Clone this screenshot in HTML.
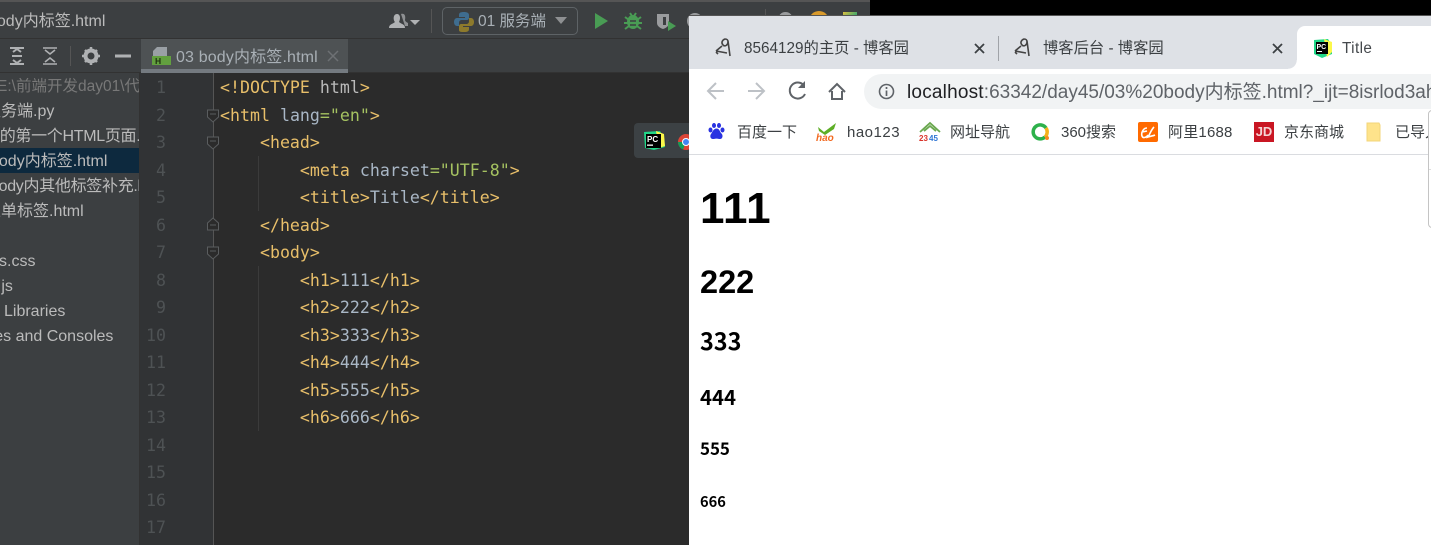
<!DOCTYPE html>
<html lang="zh"><head><meta charset="utf-8"><title>Title</title>
<style>
*{box-sizing:border-box}
html,body{margin:0;padding:0;width:1431px;height:545px;overflow:hidden;background:#000}
body{position:relative;font-family:"Liberation Sans","Noto Sans CJK SC",sans-serif}
.a{position:absolute;white-space:nowrap}
svg{position:absolute;overflow:visible}
.s{font-size:16px;color:#bbb;line-height:25px;height:25px;left:0}
.c{font-family:"DejaVu Sans Mono","Noto Sans CJK SC",monospace;font-size:16.6px;line-height:27px;height:27px;color:#bbb;left:220px;white-space:pre}
.t{color:#e8bf6a}.v{color:#a5c261}.x{color:#a9b7c6}.p{color:#bababa}
.n{font-family:"DejaVu Sans Mono",monospace;font-size:16.6px;line-height:27px;height:27px;color:#4e5254;width:30px;text-align:right;left:136px}
.tab{font-size:15.3px;color:#3c4043;line-height:20px}
.bm{font-size:15px;color:#3c4043;line-height:20px;top:123px}
h1,h2,h3,h4,h5,h6{position:absolute;margin:0;left:700px;color:#000;font-family:"Noto Sans CJK SC","Liberation Sans",sans-serif;font-weight:700;line-height:1.2}
</style></head><body>

<div class="a" style="left:0;top:0;width:870px;height:545px;background:#3c3f41"></div>
<div class="a" style="left:0;top:0;width:870px;height:2px;background:#555"></div>
<div class="a" style="left:0;top:38px;width:870px;height:1px;background:#323232"></div>
<div class="a" style="left:0;top:72px;width:870px;height:1px;background:#323232"></div>
<div class="a" style="left:-12px;top:11px;font-size:16px;color:#bbb;line-height:22px">body内标签.html</div>

<svg style="left:0;top:40px" width="140" height="32" fill="none" stroke="#afb1b3" stroke-width="2">
<path d="M10 8H24M10 24H24M13 12l4-3 4 3M13 20l4 3 4-3M12 16H22"/><path d="M43 8H57M43 24H57M45 10l5 4 5-4M45 22l5-4 5 4" stroke-width="1.6"/>
<path d="M70.500 6V26" stroke="#555" stroke-width="1"/>
<circle cx="91" cy="16" r="5.500" stroke-width="4"/><path d="M91 7v3M91 22v3M82 16h3M97 16h3M85 10l2 2M95 20l2 2M97 10l-2 2M87 20l-2 2" stroke-width="2.500"/>
<path d="M115 16H131" stroke-width="3"/></svg>

<div class="a" style="left:0;top:73px;width:140px;height:472px;background:#3c3f41"></div>
<div class="a" style="left:0;top:148px;width:139px;height:25px;background:#0d293e"></div>
<div class="a" style="left:139px;top:73px;width:1px;height:472px;background:#323232"></div>
<div style="position:absolute;left:0;top:0;width:139px;height:545px;overflow:hidden">
<div class="a s" style="left:-3px;top:74px;color:#787878;font-size:15.500px">E:\前端开发day01\代码</div>
<div class="a s" style="left:-15px;top:99px">服务端.py</div>
<div class="a s" style="left:-16px;top:124px;letter-spacing:-.3px">我的第一个HTML页面.html</div>
<div class="a s" style="left:-10px;top:149px">body内标签.html</div>
<div class="a s" style="left:-10px;top:174px;letter-spacing:-.3px">body内其他标签补充.html</div>
<div class="a s" style="left:-15px;top:199px">表单标签.html</div>
<div class="a s" style="left:-17px;top:249px">css.css</div>
<div class="a s" style="left:-12px;top:274px">a.js</div>
<div class="a s" style="left:4px;top:299px">Libraries</div>
<div class="a s" style="left:-60px;top:324px">Scratches and Consoles</div>
</div>

<div class="a" style="left:141px;top:39px;width:207px;height:33px;background:#4e5254"></div>
<div class="a" style="left:141px;top:69px;width:207px;height:4px;background:#747a80"></div>
<svg style="left:152px;top:46px" width="20" height="20"><path d="M5 1H15V10H1V5Z" fill="#9aa0a5"/><rect x="0" y="10" width="19" height="9" fill="#62a03f"/><text x="3" y="18" font-size="8.500" font-weight="700" fill="#1e3010" font-family="Liberation Sans">H</text></svg>
<div class="a" style="left:176px;top:47px;font-size:16px;line-height:22px;color:#a9b0b6;letter-spacing:.15px">03 body内标签.html</div>
<svg style="left:327px;top:50px" width="12" height="12" stroke="#6e7174" stroke-width="1.500"><path d="M1 1L11 11M11 1L1 11"/></svg>

<svg style="left:386px;top:8px" width="40" height="26"><path d="M3 20c0-4 4-4 6-6-2-2-2-8 2-8 3 0 4 4 2 8 2 2 6 2 6 6Z" fill="#afb1b3"/><path d="M15 6c3-1 5 1 4 6 0 1 1 2 3 3l0 3h-3" fill="#8e9092"/><path d="M24 12H34L29 17Z" fill="#afb1b3"/></svg>
<div class="a" style="left:430.500px;top:9px;width:1px;height:24px;background:#555"></div>
<div class="a" style="left:442px;top:7px;width:136px;height:28px;border:1px solid #5e6366;border-radius:5px;background:#3c3f41"></div>
<svg style="left:453px;top:11px" width="22" height="22"><path d="M11 1c-4 0-5 1-5 3v2h6v1H4c-2 0-3 2-3 4s1 4 3 4h2v-3c0-2 1-3 3-3h5c1 0 2-1 2-2V4c0-2-2-3-5-3Z" fill="#3f6d8f"/><path d="M11 21c4 0 5-1 5-3v-2h-6v-1h8c2 0 3-2 3-4s-1-4-3-4h-2v3c0 2-1 3-3 3H8c-1 0-2 1-2 2v4c0 2 2 2 5 2Z" fill="#8d7a2c"/></svg>
<div class="a" style="left:478px;top:11px;font-size:15.500px;line-height:22px;color:#a9b0b6">01 服务端</div>
<svg style="left:555px;top:17px" width="14" height="8"><path d="M0 0H12L6 7Z" fill="#8e9092"/></svg>
<svg style="left:595px;top:13px" width="14" height="16"><path d="M0 0L13 8L0 16Z" fill="#499c54"/></svg>
<svg style="left:624px;top:12px" width="18" height="18" fill="none" stroke="#499c54"><ellipse cx="9" cy="10" rx="6" ry="7" fill="#499c54" stroke="none"/><path d="M1 5l4 3M17 5l-4 3M0 11h4M18 11h-4M1 17l4-3M17 17l-4-3M6 1l2 3M12 1l-2 3" stroke-width="2"/><path d="M6 9h6M6 13h6" stroke="#3c3f41" stroke-width="1.500"/></svg>
<svg style="left:657px;top:13px" width="20" height="18"><path d="M0 1H12V10C12 13 9 15 6 16C3 15 0 13 0 10Z" fill="#9a9c9e"/><path d="M6 4H9V12H6Z" fill="#3c3f41"/><path d="M11 8L19 13L11 18Z" fill="#499c54"/></svg>
<div class="a" style="left:687px;top:13px;width:16px;height:16px;border-radius:8px;background:#9a9c9e"></div>
<div class="a" style="left:765px;top:9px;width:1px;height:24px;background:#555"></div>
<div class="a" style="left:778px;top:12px;width:15px;height:15px;border-radius:8px;background:#9a9c9e"></div>
<div class="a" style="left:809px;top:11px;width:20px;height:20px;border-radius:10px;background:#d99a2b"></div>
<div class="a" style="left:843px;top:12px;width:14px;height:14px;background:linear-gradient(135deg,#e0c040,#3aa76d 60%,#3b7fc4)"></div>

<div class="a" style="left:140px;top:73px;width:730px;height:472px;background:#2b2b2b"></div>
<div class="a" style="left:140px;top:73px;width:73px;height:472px;background:#313335"></div>
<div class="a" style="left:213px;top:73px;width:1px;height:472px;background:#555"></div>
<div class="a" style="left:258px;top:156px;width:1px;height:55px;background:#3b3b3b"></div>
<div class="a" style="left:258px;top:266px;width:1px;height:165px;background:#3b3b3b"></div>

<div class="a n" style="top:74px">1</div><div class="a n" style="top:102px">2</div><div class="a n" style="top:129px">3</div><div class="a n" style="top:157px">4</div><div class="a n" style="top:184px">5</div><div class="a n" style="top:212px">6</div><div class="a n" style="top:239px">7</div><div class="a n" style="top:267px">8</div><div class="a n" style="top:294px">9</div><div class="a n" style="top:322px">10</div><div class="a n" style="top:349px">11</div><div class="a n" style="top:377px">12</div><div class="a n" style="top:404px">13</div><div class="a n" style="top:432px">14</div><div class="a n" style="top:459px">15</div><div class="a n" style="top:487px">16</div><div class="a n" style="top:514px">17</div>

<svg style="left:206px;top:108px" width="14" height="150" fill="#2b2b2b" stroke="#5a5d5f" stroke-width="1">
<path d="M1.500 2H12.500V9L7 14L1.500 9Z"/><path d="M4 6H10"/>
<path d="M1.500 29H12.500V36L7 41L1.500 36Z"/><path d="M4 33H10"/>
<path d="M1.500 122H12.500V115L7 110L1.500 115Z" /><path d="M4 117H10"/>
<path d="M1.500 139H12.500V146L7 151L1.500 146Z"/><path d="M4 143H10"/>
</svg>

<div class="a c" style="top:74px"><span class="t">&lt;!DOCTYPE </span><span class="p">html</span><span class="t">&gt;</span></div>
<div class="a c" style="top:102px"><span class="t">&lt;html </span><span class="x">lang</span><span class="v">="en"</span><span class="t">&gt;</span></div>
<div class="a c" style="top:129px"><span class="t">    &lt;head&gt;</span></div>
<div class="a c" style="top:157px"><span class="t">        &lt;meta </span><span class="x">charset</span><span class="v">="UTF-8"</span><span class="t">&gt;</span></div>
<div class="a c" style="top:184px"><span class="t">        &lt;title&gt;</span><span class="x">Title</span><span class="t">&lt;/title&gt;</span></div>
<div class="a c" style="top:212px"><span class="t">    &lt;/head&gt;</span></div>
<div class="a c" style="top:239px"><span class="t">    &lt;body&gt;</span></div>
<div class="a c" style="top:267px"><span class="t">        &lt;h1&gt;</span><span class="x">111</span><span class="t">&lt;/h1&gt;</span></div>
<div class="a c" style="top:294px"><span class="t">        &lt;h2&gt;</span><span class="x">222</span><span class="t">&lt;/h2&gt;</span></div>
<div class="a c" style="top:322px"><span class="t">        &lt;h3&gt;</span><span class="x">333</span><span class="t">&lt;/h3&gt;</span></div>
<div class="a c" style="top:349px"><span class="t">        &lt;h4&gt;</span><span class="x">444</span><span class="t">&lt;/h4&gt;</span></div>
<div class="a c" style="top:377px"><span class="t">        &lt;h5&gt;</span><span class="x">555</span><span class="t">&lt;/h5&gt;</span></div>
<div class="a c" style="top:404px"><span class="t">        &lt;h6&gt;</span><span class="x">666</span><span class="t">&lt;/h6&gt;</span></div>

<div class="a" style="left:634px;top:123px;width:60px;height:35px;background:#3c4144;border-radius:4px"></div>
<svg style="left:642px;top:130px" width="24" height="22"><path d="M2 2L18 1L22 8L23 17L12 20L3 18Z" fill="#21d789"/><path d="M14 1L22 4L23 16L17 18Z" fill="#fcf84a"/><rect x="4" y="4" width="15" height="14" fill="#000"/><text x="5" y="12" font-size="8" font-weight="700" fill="#fff" font-family="Liberation Sans">PC</text><rect x="5" y="14.500" width="6" height="1.300" fill="#fff"/></svg>
<svg style="left:677px;top:133px" width="14" height="18"><circle cx="9" cy="9" r="8" fill="#db4437"/><path d="M9 9L1 9A8 8 0 0 0 6 16.500Z" fill="#0f9d58"/><circle cx="9" cy="9" r="3.500" fill="#4285f4" stroke="#fff"/></svg>

<div class="a" style="left:689px;top:15px;width:742px;height:530px;background:#fff"></div>
<div class="a" style="left:870px;top:0;width:561px;height:15px;background:#000"></div>
<div class="a" style="left:689px;top:15px;width:742px;height:1px;background:#555"></div>
<div class="a" style="left:689px;top:16px;width:742px;height:53px;background:#dee1e6"></div>
<div class="a" style="left:1297px;top:26px;width:134px;height:43px;background:#fff;border-radius:8px 0 0 0"></div>
<div class="a" style="left:1288px;top:60px;width:9px;height:9px;background:radial-gradient(circle at 0 0,#dee1e6 8.500px,#fff 9px)"></div>

<svg style="left:715px;top:38px" width="18" height="20" fill="none" stroke="#444" stroke-width="1.600"><path d="M1 13L7 8M1 13L12 15M10 1c-3 1-4 4-2 6s5 0 5-3-2-3-3-3ZM13 3L15 18M1 14l2 2"/></svg>
<div class="a tab" style="left:744px;top:39px">8564129的主页 - 博客园</div>
<svg style="left:974px;top:43px" width="11" height="11" stroke="#3c4043" stroke-width="1.800"><path d="M1 1L10 10M10 1L1 10"/></svg>
<div class="a" style="left:998px;top:36px;width:1px;height:25px;background:#a0a3a8"></div>
<svg style="left:1014px;top:38px" width="18" height="20" fill="none" stroke="#444" stroke-width="1.600"><path d="M1 13L7 8M1 13L12 15M10 1c-3 1-4 4-2 6s5 0 5-3-2-3-3-3ZM13 3L15 18M1 14l2 2"/></svg>
<div class="a tab" style="left:1043px;top:39px">博客后台 - 博客园</div>
<svg style="left:1272px;top:43px" width="11" height="11" stroke="#3c4043" stroke-width="1.800"><path d="M1 1L10 10M10 1L1 10"/></svg>
<svg style="left:1312px;top:38px" width="21" height="20"><path d="M2 2L16 1L20 7L20 16L10 20L2 16Z" fill="#21d789"/><path d="M12 1L20 4L20 14L15 19Z" fill="#fcf84a"/><rect x="4" y="4" width="12" height="12" fill="#000"/><text x="4.500" y="11" font-size="7" font-weight="700" fill="#fff" font-family="Liberation Sans">PC</text><rect x="5" y="13" width="5" height="1" fill="#fff"/></svg>
<div class="a tab" style="left:1342px;top:39px;color:#45494d;letter-spacing:.4px">Title</div>

<svg style="left:705px;top:80px" width="145" height="24" fill="none" stroke-width="2">
<path d="M18 11H3M10 3L2 11L10 19" stroke="#bdc1c6" transform="translate(1 0)"/>
<path d="M43 11H58M51 3L59 11L51 19" stroke="#bdc1c6"/>
<path d="M99 5.500A8 8 0 1 0 100 14" stroke="#5f6368"/><path d="M100 1V8H93Z" fill="#5f6368" stroke="none"/>
<path d="M124 12L132 4L140 12M127 11V19H137V11" stroke="#5f6368"/>
</svg>
<div class="a" style="left:864px;top:74px;width:567px;height:35px;background:#f1f3f4;border-radius:18px 0 0 18px"></div>
<svg style="left:878px;top:83px" width="18" height="18" fill="none"><circle cx="8.500" cy="8.500" r="7" stroke="#5f6368" stroke-width="1.600"/><path d="M8.500 7.500V13M8.500 4V6" stroke="#5f6368" stroke-width="1.700"/></svg>
<div class="a" style="left:907px;top:81px;font-size:19px;line-height:24px;color:#5f6368;width:524px;overflow:hidden"><span style="color:#202124;letter-spacing:.2px">localhost</span>:63342/day45/03%20body内标签.html?_ijt=8isrlod3ah6</div>

<svg style="left:708px;top:122px" width="17" height="19"><g fill="#2932e1"><ellipse cx="2.500" cy="8" rx="2" ry="2.500"/><ellipse cx="6" cy="3.500" rx="2" ry="2.500"/><ellipse cx="11" cy="3.500" rx="2" ry="2.500"/><ellipse cx="14.500" cy="8" rx="2" ry="2.500"/><path d="M8.500 6.500c3 0 3 3 5 5s1 6-2 5.500-3-.5-6 0-4-3-2.500-5 2.500-5.500 5.500-5.500Z"/></g></svg>
<div class="a bm" style="left:737px">百度一下</div>
<svg style="left:816px;top:122px" width="22" height="20"><path d="M2 5L8 10L20 1L18 7L9 13L3 9Z" fill="#5dae26"/><text x="0" y="19" font-size="10" font-weight="700" font-style="italic" fill="#f26a21" font-family="Liberation Sans">hao</text></svg>
<div class="a bm" style="left:847px;letter-spacing:.5px">hao123</div>
<svg style="left:919px;top:121px" width="22" height="22" fill="none"><path d="M1 11L11 2L21 11M5 10L11 5L17 10" stroke="#6aa84f" stroke-width="1.800"/><text x="0" y="20" font-size="8" font-weight="700" fill="#d9342b" font-family="Liberation Sans">23</text><text x="10" y="20" font-size="8" font-weight="700" fill="#2e75d4" font-family="Liberation Sans">45</text></svg>
<div class="a bm" style="left:950px">网址导航</div>
<svg style="left:1030px;top:122px" width="20" height="20" fill="none"><path d="M15 15A7 7 0 1 1 16 6" stroke="#2db14b" stroke-width="3.500"/><path d="M16 6A7 7 0 0 1 15 15" stroke="#f6b21b" stroke-width="3.500"/><circle cx="17" cy="16" r="2" fill="#f68a1e"/></svg>
<div class="a bm" style="left:1061px">360搜索</div>
<svg style="left:1138px;top:122px" width="20" height="20" fill="none"><rect width="20" height="20" rx="2" fill="#ff6a00"/><path d="M9 6C5 6 3 11 4 14s5 1 6-1M4 10L9 9M16 5C13 8 12 12 10 15c3-1 5-1 7-2" stroke="#fff" stroke-width="1.600"/></svg>
<div class="a bm" style="left:1168px;letter-spacing:.2px">阿里1688</div>
<div class="a" style="left:1254px;top:122px;width:20px;height:20px;background:#c91623;color:#f5d5d5;font:700 13px/20px 'Liberation Sans',sans-serif;text-align:center">JD</div>
<div class="a bm" style="left:1284px">京东商城</div>
<svg style="left:1366px;top:122px" width="16" height="20"><path d="M1 1H13L14 3V19H1Z" fill="#fee38b" stroke="#f3d57a"/></svg>
<div class="a bm" style="left:1395px">已导入</div>
<div class="a" style="left:689px;top:154px;width:742px;height:1px;background:#dadce0"></div>

<div class="a" style="left:1428px;top:110px;width:10px;height:118px;background:#fff;border:1px solid #c4c4c4;border-radius:4px"></div>
<div class="a" style="left:1429px;top:169px;width:2px;height:1px;background:#ddd"></div>

<h1 style="top:183px;font-family:'Liberation Sans',sans-serif;font-size:44px;letter-spacing:1px;line-height:52px">111</h1>
<h2 style="top:263px;font-family:'Liberation Sans',sans-serif;font-size:32.500px;line-height:38px">222</h2>
<h3 style="top:326px;font-size:23.400px">333</h3>
<h4 style="top:384px;font-size:20.400px">444</h4>
<h5 style="top:438px;font-size:16.900px">555</h5>
<h6 style="top:493px;font-size:14.600px">666</h6>
</body></html>
